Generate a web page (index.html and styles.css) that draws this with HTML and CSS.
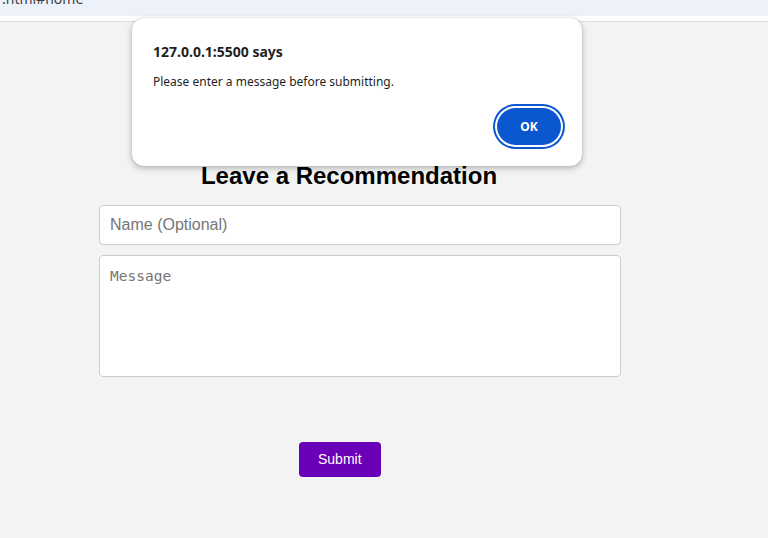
FILE: index.html
```html
<!DOCTYPE html>
<html lang="en">
<head>
<meta charset="utf-8">
<title>Leave a Recommendation</title>
<link rel="stylesheet" href="styles.css">
</head>
<body>
<div class="urlbar"><span class="url">.html#home</span></div>
<div class="strip"></div>
<main class="main">
  <h2 class="title">Leave a Recommendation</h2>
  <input class="field" type="text" placeholder="Name (Optional)">
  <textarea class="field area" placeholder="Message"></textarea>
  <button class="submit" type="button">Submit</button>
</main>
<div class="dialog">
  <div class="dlg-title">127.0.0.1:5500 says</div>
  <div class="dlg-msg">Please enter a message before submitting.</div>
  <div class="dlg-actions"><button class="ok" type="button">OK</button></div>
</div>
</body>
</html>
```
FILE: styles.css
```css
html, body {
  margin: 0;
  padding: 0;
}
body {
  background: #f3f3f3;
  font-family: "Liberation Sans", Arial, sans-serif;
  height: 538px;
  overflow: hidden;
}
.urlbar {
  height: 16px;
  background: #edf2fa;
  overflow: hidden;
}
.url {
  display: block;
  margin-top: -11px;
  margin-left: 2px;
  font-family: "Noto Sans", sans-serif;
  font-size: 14px;
  line-height: 20px;
  color: #3c4043;
}
.strip {
  height: 5px;
  background: #ffffff;
  border-bottom: 1px solid #dedede;
}
.main {
  width: 500px;
  margin-left: 99px;
  padding-top: 140px;
}
.title {
  margin: 0 0 15px 0;
  font-size: 24px;
  line-height: 28px;
  font-weight: bold;
  text-align: center;
  color: #000;
}
.field {
  display: block;
  width: 100%;
  box-sizing: content-box;
  padding: 10px;
  border: 1px solid #cccccc;
  border-radius: 4px;
  background: #fff;
  font-family: "Liberation Sans", Arial, sans-serif;
  font-size: 16px;
  line-height: 18px;
  margin: 0 0 10px 0;
  outline: none;
}
.field::placeholder {
  color: #757575;
}
.area {
  height: 98px;
  padding-top: 12px;
  resize: none;
  font-family: "DejaVu Sans Mono", monospace;
  font-size: 14.5px;
  line-height: 17px;
  margin-bottom: 65px;
}
.submit {
  display: block;
  margin-left: 200px;
  padding: 10px 19px;
  border: none;
  border-radius: 4px;
  background: #6a00b8;
  color: #fff;
  font-family: "Liberation Sans", Arial, sans-serif;
  font-size: 14px;
  line-height: 15px;
}
.dialog {
  position: absolute;
  left: 132px;
  top: 18px;
  width: 450px;
  height: 148px;
  box-sizing: border-box;
  padding: 24px 17px 0 21px;
  background: #fff;
  border-radius: 12px;
  box-shadow: 0 2px 6px rgba(0, 0, 0, 0.28), 0 0 1px rgba(0, 0, 0, 0.25);
  font-family: "Noto Sans", sans-serif;
  color: #1f1f1f;
}
.dlg-title {
  font-size: 14px;
  font-weight: bold;
  line-height: 19px;
}
.dlg-msg {
  margin-top: 12px;
  font-size: 12px;
  line-height: 17px;
}
.dlg-actions {
  display: flex;
  justify-content: flex-end;
  margin-top: 18px;
  padding-right: 4px;
}
.ok {
  width: 64px;
  height: 37px;
  border: none;
  border-radius: 19px;
  background: #0b57d0;
  box-shadow: 0 0 0 2px #fff, 0 0 0 4px #0b57d0;
  color: #fff;
  font-family: "Noto Sans", sans-serif;
  font-size: 12px;
  font-weight: bold;
}
```
